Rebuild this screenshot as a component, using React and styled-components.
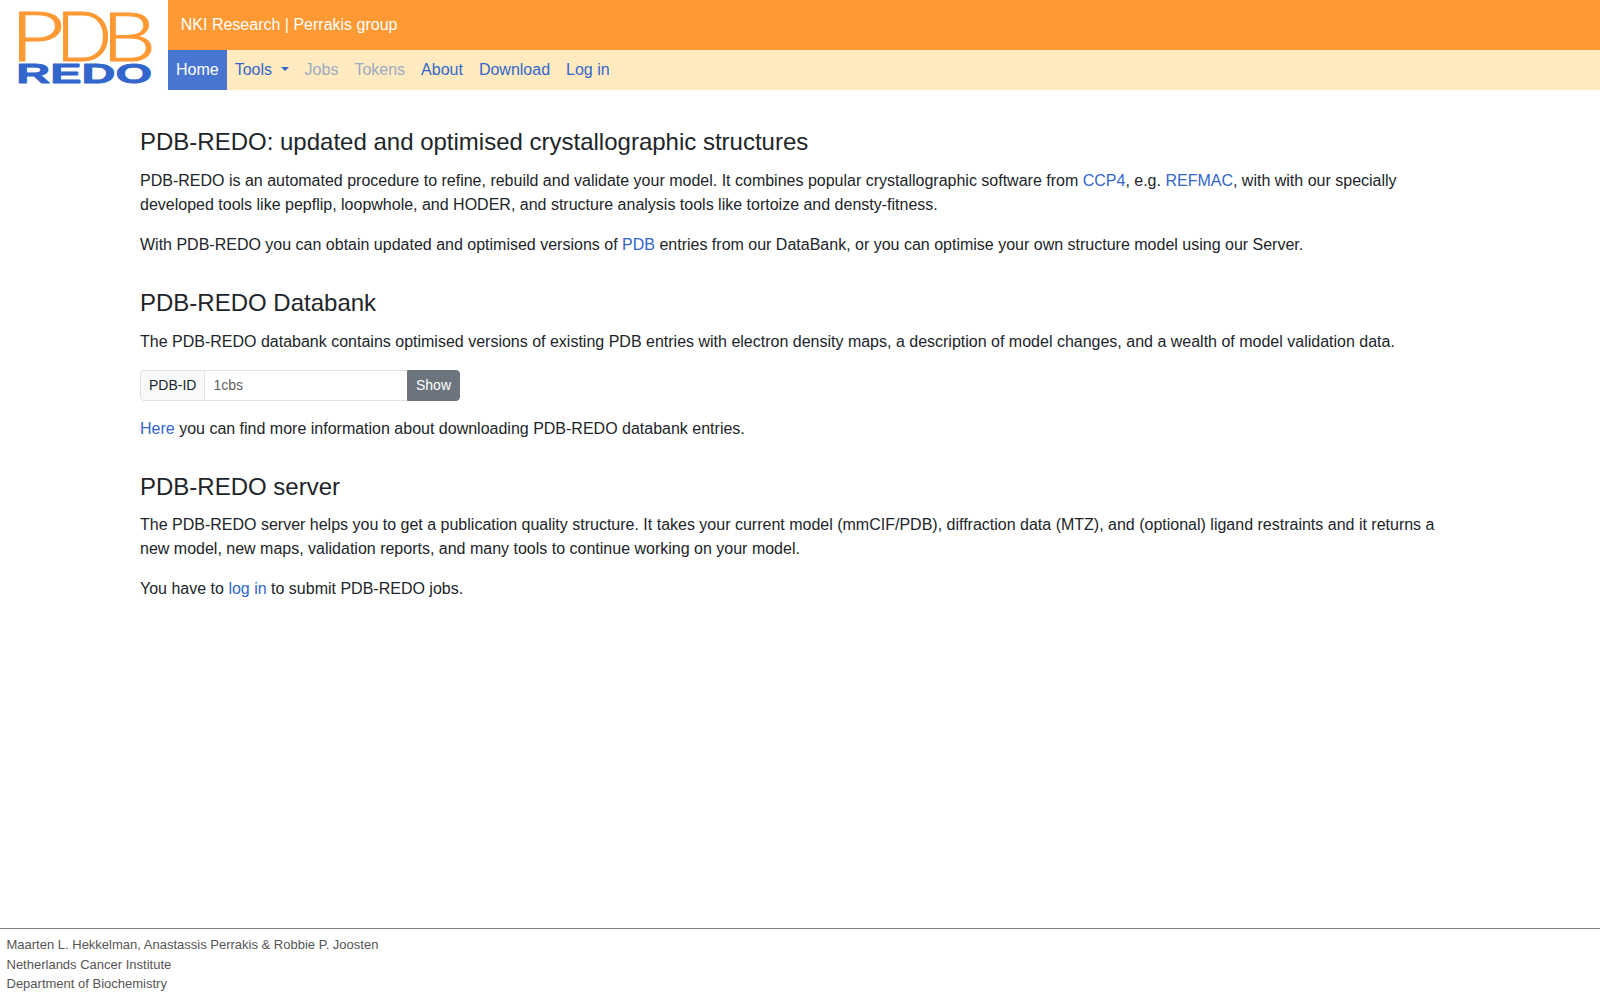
import React from "react";
import styled, { createGlobalStyle } from "styled-components";

const GlobalStyle = createGlobalStyle`
  *, *::before, *::after { box-sizing: border-box; }
  body {
    margin: 0;
    background: #fff;
    color: #212529;
    font-family: "Liberation Sans", Arial, sans-serif;
    font-size: 16px;
    line-height: 1.5;
  }
`;

const Page = styled.div`
  display: flex;
  flex-direction: column;
  height: 100vh;
`;

const Header = styled.header`
  display: flex;
  height: 90px;
`;

const LogoLink = styled.a`
  display: block;
  flex: 0 0 168px;
  height: 90px;
`;

const LogoDrawing = styled.svg`
  display: block;
  overflow: visible;
`;

const Bars = styled.div`
  flex: 1;
  display: flex;
  flex-direction: column;
`;

const TopBar = styled.div`
  height: 50px;
  display: flex;
  align-items: center;
  gap: 4.45px;
  padding: 0 12.8px;
  background: #ff9933;
  color: #fff;
`;

const TopLink = styled.a`
  color: inherit;
  text-decoration: none;
`;

const Nav = styled.nav`
  height: 40px;
  display: flex;
  background: #ffebbf;
`;

const NavItem = styled.a`
  display: flex;
  align-items: center;
  padding: 8px;
  text-decoration: none;
  white-space: nowrap;
  color: ${(p) => (p.$active ? "#fff" : p.$disabled ? "#9daac4" : "#3366cc")};
  background: ${(p) => (p.$active ? "#4775d1" : "transparent")};
`;

const Caret = styled.span`
  margin: 0 -0.4px 2px 8.95px;
  border-top: 4px solid;
  border-left: 4px solid transparent;
  border-right: 4px solid transparent;
`;

const Main = styled.main`
  flex: 1;
  width: 1320px;
  margin: 0 auto;
  padding-top: 6px;
`;

const Heading = styled.h4`
  margin: 32px 0 12px;
  font-size: 24px;
  font-weight: 400;
  line-height: 1.2;
`;

const Paragraph = styled.p`
  margin: 0 0 16px;
`;

const Link = styled.a`
  color: #3366cc;
  text-decoration: none;
`;

const InputGroup = styled.form`
  display: flex;
  width: 320px;
  height: 31px;
  margin: 0 0 16px;
  font-size: 14px;
`;

const InputLabel = styled.label`
  display: flex;
  align-items: center;
  padding: 0 8px;
  border: 1px solid #dee2e6;
  border-radius: 4px 0 0 4px;
  background: #f8f9fa;
`;

const Input = styled.input`
  flex: 1;
  min-width: 0;
  margin: 0 0 0 -1px;
  padding: 4px 8px;
  border: 1px solid #dee2e6;
  border-radius: 0;
  font: inherit;
  color: #212529;
  &::placeholder { color: rgba(33, 37, 41, 0.75); opacity: 1; }
`;

const Button = styled.button`
  margin: 0 0 0 -1px;
  padding: 4px 8px;
  border: 1px solid #6c757d;
  border-radius: 0 4px 4px 0;
  background: #6c757d;
  color: #fff;
  font: inherit;
`;

const Footer = styled.footer`
  border-top: 1px solid #808080;
  height: 72px;
  padding: 6px 6.5px 0;
  font-size: 13px;
  line-height: 19.5px;
  color: #555;
`;

const navItems = [
  { label: "Home", active: true },
  { label: "Tools", menu: true },
  { label: "Jobs", disabled: true },
  { label: "Tokens", disabled: true },
  { label: "About" },
  { label: "Download" },
  { label: "Log in" },
];

function Logo() {
  return (
    <LogoDrawing width="168" height="90" viewBox="0 0 168 90">
      <g fontFamily="Lato" fontWeight="300" fontSize="68" fill="#ff9933" stroke="#ff9933" strokeWidth="1.1">
        <text transform="translate(9.9 60.7) scale(1.38 1)">P</text>
        <text transform="translate(55.9 60.7) scale(1.08 1)">D</text>
        <text transform="translate(101.7 60.7) scale(1.26 1)">B</text>
      </g>
      <text
        transform="translate(16.2 82.8) scale(1.68 1)"
        fontFamily="Liberation Sans"
        fontWeight="700"
        fontSize="28"
        fill="#3366cc"
        stroke="#3366cc"
        strokeWidth="0.8"
        strokeLinejoin="round"
      >
        REDO
      </text>
    </LogoDrawing>
  );
}

export default function App() {
  return (
    <>
      <GlobalStyle />
      <Page>
        <Header>
          <LogoLink aria-label="PDB-REDO">
            <Logo />
          </LogoLink>
          <Bars>
            <TopBar>
              <TopLink>NKI Research</TopLink>
              <span>|</span>
              <TopLink>Perrakis group</TopLink>
            </TopBar>
            <Nav>
              {navItems.map((item) => (
                <NavItem key={item.label} $active={item.active} $disabled={item.disabled}>
                  {item.label}
                  {item.menu && <Caret />}
                </NavItem>
              ))}
            </Nav>
          </Bars>
        </Header>
        <Main>
          <Heading>PDB-REDO: updated and optimised crystallographic structures</Heading>
          <Paragraph>
            PDB-REDO is an automated procedure to refine, rebuild and validate your model. It
            combines popular crystallographic software from <Link>CCP4</Link>, e.g.{" "}
            <Link>REFMAC</Link>, with with our specially developed tools like pepflip, loopwhole,
            and HODER, and structure analysis tools like tortoize and densty-fitness.
          </Paragraph>
          <Paragraph>
            With PDB-REDO you can obtain updated and optimised versions of <Link>PDB</Link> entries
            from our DataBank, or you can optimise your own structure model using our Server.
          </Paragraph>
          <Heading>PDB-REDO Databank</Heading>
          <Paragraph>
            The PDB-REDO databank contains optimised versions of existing PDB entries with electron
            density maps, a description of model changes, and a wealth of model validation data.
          </Paragraph>
          <InputGroup>
            <InputLabel htmlFor="pdb-id">PDB-ID</InputLabel>
            <Input id="pdb-id" placeholder="1cbs" />
            <Button type="button">Show</Button>
          </InputGroup>
          <Paragraph>
            <Link>Here</Link> you can find more information about downloading PDB-REDO databank
            entries.
          </Paragraph>
          <Heading>PDB-REDO server</Heading>
          <Paragraph>
            The PDB-REDO server helps you to get a publication quality structure. It takes your
            current model (mmCIF/PDB), diffraction data (MTZ), and (optional) ligand restraints and
            it returns a new model, new maps, validation reports, and many tools to continue working
            on your model.
          </Paragraph>
          <Paragraph>
            You have to <Link>log in</Link> to submit PDB-REDO jobs.
          </Paragraph>
        </Main>
        <Footer>
          <div>Maarten L. Hekkelman, Anastassis Perrakis &amp; Robbie P. Joosten</div>
          <div>Netherlands Cancer Institute</div>
          <div>Department of Biochemistry</div>
        </Footer>
      </Page>
    </>
  );
}
